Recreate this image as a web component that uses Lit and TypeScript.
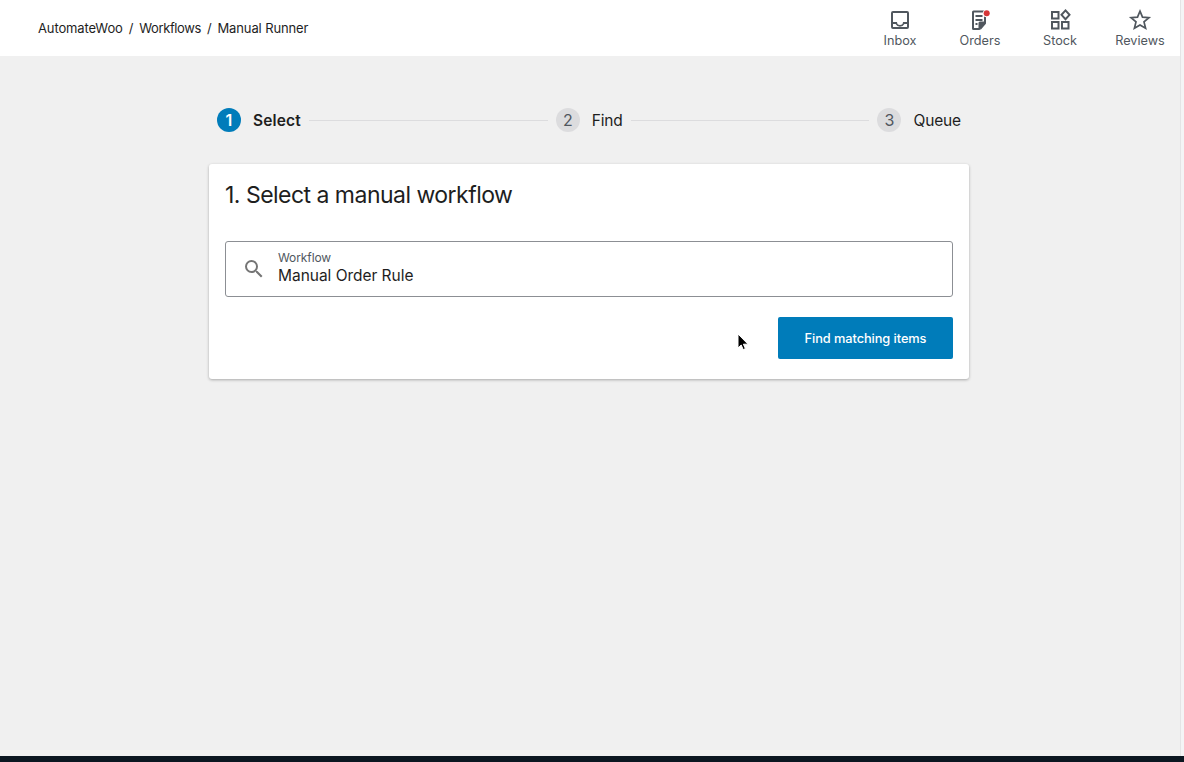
import { LitElement, html, css } from "lit";
import { customElement } from "lit/decorators.js";

@customElement("app-root")
export class AppRoot extends LitElement {
  static styles = css`
    :host {
      display: flex;
      flex-direction: column;
      width: 1184px;
      height: 762px;
      overflow: hidden;
      position: relative;
      font-family: Inter, "Noto Sans", "Liberation Sans", sans-serif;
      color: #1e1e1e;
      background: #f0f0f0;
    }
    .top { flex: 1; display: flex; min-height: 0; }
    .main { flex: 1; display: flex; flex-direction: column; min-width: 0; border-right: 1px solid #e4e4e5; }
    .strip { width: 3px; background: #f4f4f5; }
    .footer { height: 6px; background: #0b1620; }
    header {
      height: 56px;
      background: #fff;
      display: flex;
      align-items: center;
      justify-content: space-between;
      padding-left: 38px;
    }
    .crumbs { display: flex; gap: 6px; font-size: 13px; letter-spacing: -0.12px; color: #1e1e1e; }
    .crumbs .tight { letter-spacing: -0.4px; }
    .nav { display: flex; }
    .nav-item {
      width: 80px;
      height: 56px;
      display: flex;
      flex-direction: column;
      align-items: center;
      padding-top: 8px;
      box-sizing: border-box;
      font-size: 12.7px;
      letter-spacing: -0.02px;
      color: #50575e;
      gap: 1px;
    }
    .nav-item svg { width: 24px; height: 24px; display: block; }
    .nav-item span { line-height: 15px; }
    .content { width: 760px; margin: 0 0 0 209px; padding-top: 52px; }
    .stepper { display: flex; align-items: center; padding: 0 8px; height: 24px; }
    .step { display: flex; align-items: center; font-size: 15.5px; letter-spacing: -0.15px; }
    .num {
      width: 24px;
      height: 24px;
      border-radius: 50%;
      background: #dcdcde;
      color: #50575e;
      font-size: 16px;
      display: flex;
      align-items: center;
      justify-content: center;
      margin-right: 12px;
    }
    .step.active { font-weight: 600; letter-spacing: 0.15px; }
    .step.active .num { background: #007cba; color: #fff; }
    .line { flex: 1; height: 1px; background: #dcdcde; margin: 0 8px; }
    .card {
      margin-top: 32px;
      background: #fff;
      border-radius: 3px;
      box-shadow: 0 1px 3px rgba(0, 0, 0, 0.3);
      padding: 16px;
      height: 215px;
      box-sizing: border-box;
      display: flex;
      flex-direction: column;
    }
    h2 {
      margin: 0;
      font-size: 23px;
      font-weight: 400;
      letter-spacing: -0.52px;
      line-height: 30px;
    }
    .field {
      margin-top: 31px;
      height: 56px;
      box-sizing: border-box;
      border: 1px solid #8c8f94;
      border-radius: 3px;
      display: flex;
      align-items: center;
      padding-left: 16px;
    }
    .field svg { width: 24px; height: 24px; fill: #757575; flex: none; }
    .field-text { margin-left: 12px; display: flex; flex-direction: column; }
    .label { font-size: 12px; line-height: 14px; color: #50575e; letter-spacing: -0.1px; margin-top: -1px; }
    .value { font-size: 15.5px; line-height: 20px; letter-spacing: -0.03px; color: #1e1e1e; margin-top: 1px; }
    .actions { margin-top: 20px; display: flex; justify-content: flex-end; }
    button {
      width: 175px;
      height: 42px;
      border: none;
      border-radius: 2px;
      background: #007cba;
      color: #fff;
      font: 500 12.8px Inter, "Noto Sans", sans-serif;
      letter-spacing: -0.07px;
    }
    .cursor { position: absolute; left: 736px; top: 333px; width: 13px; height: 20px; }
  `;

  render() {
    return html`
      <div class="top">
        <div class="main">
          <header>
            <div class="crumbs">
              <span>AutomateWoo</span><span>/</span><span class="tight">Workflows</span><span>/</span><span>Manual Runner</span>
            </div>
            <nav class="nav">
              <div class="nav-item">
                <svg viewBox="0 0 24 24"><path fill="#50575e" d="M5 3h14a2 2 0 0 1 2 2v14a2 2 0 0 1-2 2H5a2 2 0 0 1-2-2V5a2 2 0 0 1 2-2zm0 2v9h4a3 3 0 0 0 6 0h4V5H5zm0 11v3h14v-3h-2.6a5 5 0 0 1-8.8 0H5z"/></svg>
                <span>Inbox</span>
              </div>
              <div class="nav-item">
                <svg viewBox="0 0 24 24">
                  <path fill="#50575e" fill-rule="evenodd" d="M5.5 2.5h11a1.5 1.5 0 0 1 1.5 1.5v11.5L11.5 22h-6A1.5 1.5 0 0 1 4 20.500V4a1.500 1.500 0 0 1 1.500-1.500zM6 4.500v15.500h4.500v-5a1.500 1.500 0 0 1 1.500-1.500h4V4.500H6z"/>
                  <path fill="#50575e" d="M7.500 7h7v2h-7zM7.500 11h7v2h-7zM7.500 15h2v2h-2zM12.500 15.500H18L12.500 22z"/>
                  <circle cx="18.700" cy="5.300" r="3.900" fill="#fff"/>
                  <circle cx="18.700" cy="5.300" r="3" fill="#d63638"/>
                </svg>
                <span>Orders</span>
              </div>
              <div class="nav-item">
                <svg viewBox="0 0 24 24" fill="none" stroke="#50575e" stroke-width="2">
                  <rect x="4" y="4" width="6.500" height="6.500"/>
                  <rect x="4" y="14" width="6.500" height="6.500"/>
                  <rect x="14" y="14" width="6.500" height="6.500"/>
                  <path d="M17.500 2.400l4 4.400-4 4.400-4-4.400z"/>
                </svg>
                <span>Stock</span>
              </div>
              <div class="nav-item">
                <svg viewBox="0 0 24 24" fill="none" stroke="#50575e" stroke-width="1.700" stroke-linejoin="miter">
                  <path d="M12 3.200l2.500 6 6.500.5-5 4.200 1.600 6.300L12 16.900l-5.600 3.300L8 13.900 3 9.700l6.500-.5z"/>
                </svg>
                <span>Reviews</span>
              </div>
            </nav>
          </header>
          <div class="content">
            <div class="stepper">
              <div class="step active"><span class="num">1</span>Select</div>
              <div class="line"></div>
              <div class="step"><span class="num">2</span>Find</div>
              <div class="line"></div>
              <div class="step"><span class="num">3</span>Queue</div>
            </div>
            <section class="card">
              <h2>1. Select a manual workflow</h2>
              <div class="field">
                <svg viewBox="0 0 24 24"><path d="M15.500 14h-.79l-.28-.27A6.470 6.470 0 0 0 16 9.500 6.500 6.500 0 1 0 9.500 16c1.610 0 3.090-.59 4.230-1.570l.27.28v.79l5 4.990L20.490 19l-4.990-5zm-6 0C7.010 14 5 11.990 5 9.500S7.010 5 9.500 5 14 7.010 14 9.500 11.990 14 9.500 14z"/></svg>
                <div class="field-text">
                  <span class="label">Workflow</span>
                  <span class="value">Manual Order Rule</span>
                </div>
              </div>
              <div class="actions"><button>Find matching items</button></div>
            </section>
          </div>
        </div>
        <div class="strip"></div>
      </div>
      <div class="footer"></div>
      <svg class="cursor" viewBox="0 0 13 20">
        <path d="M2 1v14l3.200-3 2 4.600 2.200-1-2-4.400H12z" fill="#000" stroke="#fff" stroke-width="1"/>
      </svg>
    `;
  }
}
